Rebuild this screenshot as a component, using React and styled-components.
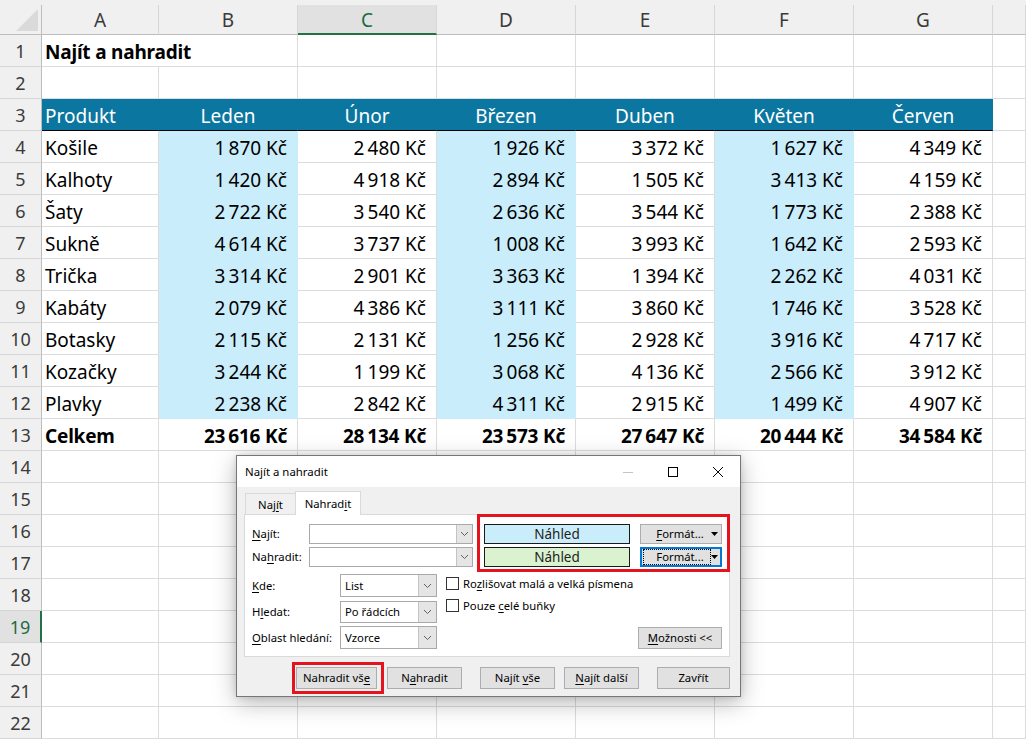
import React from 'react';
import styled, { createGlobalStyle, css } from 'styled-components';

const GlobalStyle = createGlobalStyle`
  html, body { margin: 0; padding: 0; background: #fff; overflow: hidden; }
  body { font-family: "Noto Sans", "Open Sans", sans-serif; }
  *, *::before, *::after { box-sizing: border-box; }
`;

const COLS = ['A', 'B', 'C', 'D', 'E', 'F', 'G'];
const MONTHS = ['Leden', 'Únor', 'Březen', 'Duben', 'Květen', 'Červen'];
const DATA = [
  ['Košile', 1870, 2480, 1926, 3372, 1627, 4349],
  ['Kalhoty', 1420, 4918, 2894, 1505, 3413, 4159],
  ['Šaty', 2722, 3540, 2636, 3544, 1773, 2388],
  ['Sukně', 4614, 3737, 1008, 3993, 1642, 2593],
  ['Trička', 3314, 2901, 3363, 1394, 2262, 4031],
  ['Kabáty', 2079, 4386, 3111, 3860, 1746, 3528],
  ['Botasky', 2115, 2131, 1256, 2928, 3916, 4717],
  ['Kozačky', 3244, 1199, 3068, 4136, 2566, 3912],
  ['Plavky', 2238, 2842, 4311, 2915, 1499, 4907],
];
const TOTALS = [23616, 28134, 23573, 27647, 20444, 34584];

const HEAD_FILL = '#0b76a0';
const BLUE_FILL = '#caedfb';
const GRID = '#dcdcdc';
const EXCEL_GREEN = '#217346';

const fmt = (n) => {
  const s = String(n);
  const th = s.slice(0, -3);
  const rest = s.slice(-3);
  return (th ? th + '\u202F' : '') + rest + '\u00A0Kč';
};

/* ---------------- sheet ---------------- */

const Page = styled.div`
  position: relative;
  width: 1026px;
  height: 739px;
  overflow: hidden;
  background: #fff;
`;

const TopStrip = styled.div`
  height: 5px;
  background: #f0f0f0;
`;

const Sheet = styled.div`
  display: grid;
  grid-template-columns: 42px 117px repeat(6, 139px) 1fr;
  grid-template-rows: 30px repeat(22, 32px);
`;

const Corner = styled.div`
  background: #f0f0f0;
  border-right: 1px solid #bdbdbd;
  border-bottom: 1px solid #bdbdbd;
  display: flex;
  align-items: flex-end;
  justify-content: flex-end;
  padding: 0 3px 3px 0;
`;

const ColHead = styled.div`
  background: ${(p) => (p.$active ? '#e1e1e1' : '#f0f0f0')};
  border-right: 1px solid #d6d6d6;
  border-bottom: ${(p) => (p.$active ? `2px solid ${EXCEL_GREEN}` : '1px solid #bdbdbd')};
  color: ${(p) => (p.$active ? '#1d6b41' : '#3b3b3b')};
  font-size: 19px;
  display: flex;
  align-items: center;
  justify-content: center;
  padding-top: ${(p) => (p.$active ? '1px' : '0')};
`;

const RowHead = styled.div`
  background: ${(p) => (p.$active ? '#e1e1e1' : '#f0f0f0')};
  border-right: ${(p) => (p.$active ? `2px solid ${EXCEL_GREEN}` : '1px solid #bdbdbd')};
  border-bottom: 1px solid #d6d6d6;
  color: ${(p) => (p.$active ? '#1d6b41' : '#3b3b3b')};
  font-size: 18px;
  display: flex;
  align-items: center;
  justify-content: center;
`;

const Cell = styled.div`
  grid-column: span ${(p) => p.$span || 1};
  background: ${(p) => p.$fill || '#fff'};
  border-right: 1px solid ${(p) => p.$fill || GRID};
  border-bottom: 1px solid ${(p) => p.$bottom || p.$fill || GRID};
  color: ${(p) => p.$color || '#000'};
  font-size: 19px;
  font-weight: ${(p) => (p.$bold ? 700 : 400)};
  letter-spacing: ${(p) => (p.$bold ? '-0.2px' : '0')};
  white-space: nowrap;
  overflow: visible;
  display: flex;
  align-items: center;
  padding: 3px 10px 0 3px;
  justify-content: ${(p) =>
    p.$align === 'right' ? 'flex-end' : p.$align === 'center' ? 'center' : 'flex-start'};
  ${(p) =>
    p.$align === 'center' &&
    css`
      padding-left: 0;
      padding-right: 0;
    `}
`;

function CornerTriangle() {
  return (
    <svg width="22" height="22" viewBox="0 0 22 22">
      <polygon points="0,22 22,22 22,0" fill="#dadada" />
    </svg>
  );
}

function rowCells(r) {
  const cells = [];
  if (r === 1) {
    cells.push(
      <Cell key="a" $span={2} $bold>
        Najít a nahradit
      </Cell>
    );
    for (let i = 2; i < 8; i++) cells.push(<Cell key={i} />);
    return cells;
  }
  if (r === 3) {
    cells.push(
      <Cell key="a" $fill={HEAD_FILL} $color="#fff" $bottom="#000">
        Produkt
      </Cell>
    );
    MONTHS.forEach((m, i) =>
      cells.push(
        <Cell key={i} $fill={HEAD_FILL} $color="#fff" $bottom="#000" $align="center">
          {m}
        </Cell>
      )
    );
    cells.push(<Cell key="h" />);
    return cells;
  }
  if (r >= 4 && r <= 12) {
    const row = DATA[r - 4];
    cells.push(<Cell key="a">{row[0]}</Cell>);
    row.slice(1).forEach((v, i) =>
      cells.push(
        <Cell key={i} $align="right" $fill={i % 2 === 0 ? BLUE_FILL : undefined}>
          {fmt(v)}
        </Cell>
      )
    );
    cells.push(<Cell key="h" />);
    return cells;
  }
  if (r === 13) {
    cells.push(
      <Cell key="a" $bold>
        Celkem
      </Cell>
    );
    TOTALS.forEach((v, i) =>
      cells.push(
        <Cell key={i} $bold $align="right">
          {fmt(v)}
        </Cell>
      )
    );
    cells.push(<Cell key="h" />);
    return cells;
  }
  for (let i = 0; i < 8; i++) cells.push(<Cell key={i} />);
  return cells;
}

/* ---------------- dialog ---------------- */

const Dialog = styled.div`
  position: absolute;
  left: 236px;
  top: 455px;
  width: 505px;
  height: 242px;
  background: #f0f0f0;
  border: 1px solid #767676;
  box-shadow: 0 6px 22px rgba(0, 0, 0, 0.28), 0 0 6px rgba(0, 0, 0, 0.12);
  font-family: "Noto Sans", "Open Sans", sans-serif;
  font-size: 11.3px;
  line-height: 16px;
  color: #000;
  display: flex;
  flex-direction: column;
`;

const TitleBar = styled.div`
  height: 31px;
  flex-shrink: 0;
  background: #fff;
  display: flex;
  align-items: center;
  padding-left: 8px;
`;

const Title = styled.span`
  flex: 1;
  font-size: 11.4px;
`;

const WinBtn = styled.div`
  width: 45px;
  height: 31px;
  display: flex;
  align-items: center;
  justify-content: center;
`;

const Body = styled.div`
  flex: 1;
  padding: 0 10px 0 7px;
  display: flex;
  flex-direction: column;
`;

const TabStrip = styled.div`
  height: 27px;
  display: flex;
  align-items: flex-end;
  padding-left: 1px;
`;

const Tab = styled.div`
  width: ${(p) => p.$w}px;
  height: ${(p) => (p.$active ? 24 : 21)}px;
  background: ${(p) => (p.$active ? '#fff' : '#f0f0f0')};
  border: 1px solid #d9d9d9;
  border-bottom: none;
  border-right: ${(p) => (p.$active ? '1px solid #d9d9d9' : 'none')};
  margin-bottom: ${(p) => (p.$active ? '-1px' : '0')};
  position: relative;
  z-index: ${(p) => (p.$active ? 1 : 0)};
  display: flex;
  align-items: center;
  justify-content: center;
  padding-top: ${(p) => (p.$active ? '0' : '1px')};
`;

const Panel = styled.div`
  height: 143px;
  background: #fff;
  border: 1px solid #d9d9d9;
  padding: 9px 7px 7px 7px;
  display: flex;
  flex-direction: column;
`;

const TopGrid = styled.div`
  display: grid;
  grid-template-columns: 57px 164px 157px 92px;
  grid-auto-rows: 20px;
  row-gap: 3px;
  align-items: center;
`;

const Label = styled.span`
  white-space: nowrap;
`;

const Key = styled.span`
  text-decoration: underline;
  text-underline-offset: 2px;
`;

const Combo = styled.div`
  height: ${(p) => p.$h || 20}px;
  width: 100%;
  display: flex;
  background: #fff;
  border: 1px solid #a9a9a9;
`;

const ComboField = styled.div`
  flex: 1;
  padding-left: 4px;
  display: flex;
  align-items: center;
`;

const DropBtn = styled.div`
  width: ${(p) => p.$w || 16}px;
  background: #e5e5e5;
  border-left: 1px solid #c4c4c4;
  display: flex;
  align-items: center;
  justify-content: center;
`;

const Preview = styled.div`
  justify-self: end;
  width: 146px;
  height: 20px;
  border: 1px solid #1a1a1a;
  background: ${(p) => p.$fill};
  color: #222;
  font-size: 13.5px;
  display: flex;
  align-items: center;
  justify-content: center;
`;

const FormatBtn = styled.div`
  justify-self: end;
  width: 82px;
  height: 20px;
  background: #e1e1e1;
  border: 1px solid ${(p) => (p.$focus ? '#0078d7' : '#adadad')};
  box-shadow: ${(p) => (p.$focus ? 'inset 0 0 0 1px #0078d7' : 'none')};
  display: flex;
  align-items: center;
  padding: 0 2px 0 3px;
`;

const FormatLabel = styled.span`
  flex: 1;
  height: 14px;
  display: flex;
  align-items: center;
  justify-content: center;
  outline: ${(p) => (p.$focus ? '1px dotted #000' : 'none')};
  padding-left: 6px;
`;

const Arrow = styled.span`
  width: 9px;
  display: flex;
  justify-content: center;
`;

const Mid = styled.div`
  margin-top: 7px;
  display: flex;
  flex: 1;
`;

const SelectGrid = styled.div`
  display: grid;
  grid-template-columns: 88px 97px;
  grid-auto-rows: 23px;
  row-gap: 3px;
  align-items: center;
`;

const CheckCol = styled.div`
  flex: 1;
  min-width: 0;
  margin-left: 9px;
  padding-top: 3px;
  display: flex;
  flex-direction: column;
  gap: 9px;
`;

const CheckRow = styled.div`
  display: flex;
  align-items: center;
  gap: 4px;
  height: 13px;
  white-space: nowrap;
`;

const Box = styled.span`
  width: 13px;
  height: 13px;
  border: 1px solid #333;
  background: #fff;
  flex-shrink: 0;
`;

const DlgButton = styled.div`
  width: ${(p) => p.$w}px;
  height: 22px;
  margin-left: ${(p) => p.$ml || 0}px;
  align-self: ${(p) => p.$self || 'auto'};
  background: #e1e1e1;
  border: 1px solid #adadad;
  display: flex;
  align-items: center;
  justify-content: center;
  white-space: nowrap;
  flex-shrink: 0;
`;

const ButtonRow = styled.div`
  margin-top: 10px;
  display: flex;
  padding-left: 52px;
`;

const Highlight = styled.div`
  position: absolute;
  left: ${(p) => p.$x}px;
  top: ${(p) => p.$y}px;
  width: ${(p) => p.$w}px;
  height: ${(p) => p.$h}px;
  border: 3px solid #e3141e;
  pointer-events: none;
  z-index: 5;
`;

function Chevron() {
  return (
    <svg width="9" height="6" viewBox="0 0 9 6">
      <polyline points="1,1 4.5,4.5 8,1" fill="none" stroke="#606060" strokeWidth="1" />
    </svg>
  );
}

function DownTri() {
  return (
    <svg width="7" height="4" viewBox="0 0 7 4">
      <polygon points="0,0 7,0 3.5,4" fill="#000" />
    </svg>
  );
}

function ComboBox({ value, h, btnW }) {
  return (
    <Combo $h={h}>
      <ComboField>{value}</ComboField>
      <DropBtn $w={btnW}>
        <Chevron />
      </DropBtn>
    </Combo>
  );
}

function FindReplaceDialog() {
  return (
    <Dialog>
      <TitleBar>
        <Title>Najít a nahradit</Title>
        <WinBtn>
          <svg width="10" height="10" viewBox="0 0 10 10">
            <line x1="0" y1="5.5" x2="10" y2="5.5" stroke="#c4c4c4" strokeWidth="1" />
          </svg>
        </WinBtn>
        <WinBtn>
          <svg width="10" height="10" viewBox="0 0 10 10">
            <rect x="0.5" y="0.5" width="9" height="9" fill="none" stroke="#000" strokeWidth="1" />
          </svg>
        </WinBtn>
        <WinBtn>
          <svg width="10" height="10" viewBox="0 0 10 10">
            <path d="M0 0 L10 10 M10 0 L0 10" stroke="#000" strokeWidth="1" />
          </svg>
        </WinBtn>
      </TitleBar>
      <Body>
        <TabStrip>
          <Tab $w={50}>
            <span>
              Naj<Key>í</Key>t
            </span>
          </Tab>
          <Tab $w={66} $active>
            <span>
              Nahrad<Key>i</Key>t
            </span>
          </Tab>
        </TabStrip>
        <Panel>
          <TopGrid>
            <Label>
              <Key>N</Key>ajít:
            </Label>
            <ComboBox value="" />
            <Preview $fill="#caedfb">Náhled</Preview>
            <FormatBtn>
              <FormatLabel>
                <span>
                  <Key>F</Key>ormát...
                </span>
              </FormatLabel>
              <Arrow>
                <DownTri />
              </Arrow>
            </FormatBtn>
            <Label>
              Na<Key>h</Key>radit:
            </Label>
            <ComboBox value="" />
            <Preview $fill="#daf2d0">Náhled</Preview>
            <FormatBtn $focus>
              <FormatLabel $focus>
                <span>Formát...</span>
              </FormatLabel>
              <Arrow>
                <DownTri />
              </Arrow>
            </FormatBtn>
          </TopGrid>
          <Mid>
            <SelectGrid>
              <Label>
                <Key>K</Key>de:
              </Label>
              <ComboBox value="List" h={23} btnW={18} />
              <Label>
                H<Key>l</Key>edat:
              </Label>
              <ComboBox value="Po řádcích" h={22} btnW={18} />
              <Label>
                <Key>O</Key>blast hledání:
              </Label>
              <ComboBox value="Vzorce" h={23} btnW={18} />
            </SelectGrid>
            <CheckCol>
              <CheckRow>
                <Box />
                <span>
                  Ro<Key>z</Key>lišovat malá a velká písmena
                </span>
              </CheckRow>
              <CheckRow>
                <Box />
                <span>
                  Pouze <Key>c</Key>elé buňky
                </span>
              </CheckRow>
            </CheckCol>
            <DlgButton $w={84} $self="flex-end">
              <span>
                <Key>M</Key>ožnosti &lt;&lt;
              </span>
            </DlgButton>
          </Mid>
        </Panel>
        <ButtonRow>
          <DlgButton $w={81}>
            <span>
              Nahradit vš<Key>e</Key>
            </span>
          </DlgButton>
          <DlgButton $w={75} $ml={10}>
            <span>
              N<Key>a</Key>hradit
            </span>
          </DlgButton>
          <DlgButton $w={75} $ml={18}>
            <span>
              Najít <Key>v</Key>še
            </span>
          </DlgButton>
          <DlgButton $w={75} $ml={9}>
            <span>
              <Key>N</Key>ajít další
            </span>
          </DlgButton>
          <DlgButton $w={73} $ml={18}>
            <span>Zavřít</span>
          </DlgButton>
        </ButtonRow>
      </Body>
      <Highlight $x={240} $y={58} $w={253} $h={58} />
      <Highlight $x={55} $y={206} $w={92} $h={32} />
    </Dialog>
  );
}

export default function App() {
  const rows = [];
  for (let r = 1; r <= 22; r++) {
    rows.push(
      <React.Fragment key={r}>
        <RowHead $active={r === 19}>{r}</RowHead>
        {rowCells(r)}
      </React.Fragment>
    );
  }
  return (
    <Page>
      <GlobalStyle />
      <TopStrip />
      <Sheet>
        <Corner>
          <CornerTriangle />
        </Corner>
        {COLS.map((c) => (
          <ColHead key={c} $active={c === 'C'}>
            {c}
          </ColHead>
        ))}
        <ColHead />
        {rows}
      </Sheet>
      <FindReplaceDialog />
    </Page>
  );
}
